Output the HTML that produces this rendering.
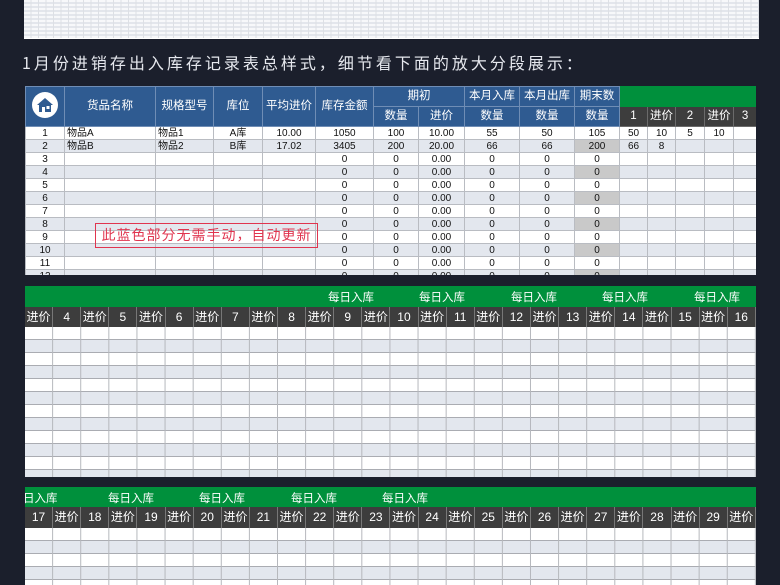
<!DOCTYPE html>
<html><head><meta charset="utf-8"><style>
*{margin:0;padding:0;box-sizing:border-box}
body{width:780px;height:585px;background:#1b1f2c;position:relative;overflow:hidden;font-family:"Liberation Sans","Noto Sans CJK SC",sans-serif}
.thumb{position:absolute;left:24px;top:0;width:735px;height:39px;background-color:#f4f5f8;
background-image:linear-gradient(90deg,transparent calc(100% - 1px),#dde0e5 0),repeating-linear-gradient(180deg,#f7f8fa 0 2px,#e3e6ec 2px 4px);
background-size:7.5px 100%,100% 100%;border-bottom:1px solid #fff}
.title{position:absolute;left:22px;top:50px;color:#e6e8ee;font-size:16px;letter-spacing:3px;white-space:nowrap;font-family:"Noto Sans CJK SC",sans-serif}
.t1{position:absolute;left:25px;top:86px;width:731px;height:189px;overflow:hidden;background:#fff}
table{border-collapse:collapse;table-layout:fixed;font-size:10px}
td{border:1px solid #b9bcc2;height:13px;text-align:center;padding:0;line-height:11px;white-space:nowrap;overflow:hidden;color:#111}
td.l{text-align:left;padding-left:2px}
.h td{background:#2f5b91;color:#fff;font-size:11.5px;border-color:#6f8db5}
tr.a td{background:#fff}
tr.b td{background:#e3e7ee}
tr.b td.g{background:#c9c9c9}
.gr{background:#00903c!important;border-color:#00903c!important}
.dk{background:#3d3d3d!important;color:#fff;font-size:11.5px;border-color:#6a6a6a!important}
.sec{position:absolute;left:25px;width:731px;background:#fff;overflow:hidden}
.gbar{height:21px;background:#00903c;position:relative;color:#fff;font-size:11.5px}
.gbar span{position:absolute;top:3px}
.dbar{display:flex;height:20px;background:#3d3d3d}
.dbar div{flex:1;color:#fff;font-size:12px;text-align:center;line-height:20px;border-right:1px solid #777}
.body{background-image:linear-gradient(90deg,transparent calc(100% - 1px),#b5b7bc 0),repeating-linear-gradient(180deg,#fff 0 12px,#aaacb2 12px 13px,#e3e7ee 13px 25px,#aaacb2 25px 26px);background-size:28.115px 100%,100% 100%}
.red{position:absolute;left:95px;top:223px;width:223px;height:25px;border:1px solid #e0354f;color:#e0354f;font-size:14px;line-height:23px;text-align:center;letter-spacing:1px;font-family:"Noto Sans CJK SC",sans-serif;white-space:nowrap}
</style></head><body>
<div class="thumb"></div>
<div class="title">1月份进销存出入库存记录表总样式，细节看下面的放大分段展示：</div>

<div class="t1"><table style="width:731px">
<colgroup><col style="width:39px"><col style="width:91px"><col style="width:58px"><col style="width:49px"><col style="width:53px"><col style="width:58px"><col style="width:45px"><col style="width:46px"><col style="width:55px"><col style="width:55px"><col style="width:45px"><col style="width:28px"><col style="width:28px"><col style="width:29px"><col style="width:29px"><col style="width:23px"></colgroup>
<tr class="h"><td rowspan="2" style="height:40px"><svg width="28" height="28" viewBox="0 0 28 28"><circle cx="14" cy="14" r="13" fill="#fff"/><path d="M6 14 L14 7 L22 14 L20 14 L20 21 L8 21 L8 14Z" fill="#2f5b91"/><rect x="11" y="16" width="3" height="5" fill="#fff"/><rect x="15.5" y="15" width="3" height="3" fill="#fff"/></svg></td>
<td rowspan="2">货品名称</td><td rowspan="2">规格型号</td><td rowspan="2">库位</td><td rowspan="2">平均进价</td><td rowspan="2">库存金额</td>
<td colspan="2" style="height:20px">期初</td><td>本月入库</td><td>本月出库</td><td>期末数</td><td colspan="5" class="gr"></td></tr>
<tr class="h"><td style="height:20px">数量</td><td>进价</td><td>数量</td><td>数量</td><td>数量</td><td class="dk">1</td><td class="dk">进价</td><td class="dk">2</td><td class="dk">进价</td><td class="dk">3</td></tr>
<tr class="a"><td>1</td><td class="l">物品A</td><td class="l">物品1</td><td>A库</td><td>10.00</td><td>1050</td><td>100</td><td>10.00</td><td>55</td><td>50</td><td>105</td><td>50</td><td>10</td><td>5</td><td>10</td><td></td></tr>
<tr class="b"><td>2</td><td class="l">物品B</td><td class="l">物品2</td><td>B库</td><td>17.02</td><td>3405</td><td>200</td><td>20.00</td><td>66</td><td>66</td><td class="g">200</td><td>66</td><td>8</td><td></td><td></td><td></td></tr>
<tr class="a"><td>3</td><td></td><td></td><td></td><td></td><td>0</td><td>0</td><td>0.00</td><td>0</td><td>0</td><td>0</td><td></td><td></td><td></td><td></td><td></td></tr>
<tr class="b"><td>4</td><td></td><td></td><td></td><td></td><td>0</td><td>0</td><td>0.00</td><td>0</td><td>0</td><td class="g">0</td><td></td><td></td><td></td><td></td><td></td></tr>
<tr class="a"><td>5</td><td></td><td></td><td></td><td></td><td>0</td><td>0</td><td>0.00</td><td>0</td><td>0</td><td>0</td><td></td><td></td><td></td><td></td><td></td></tr>
<tr class="b"><td>6</td><td></td><td></td><td></td><td></td><td>0</td><td>0</td><td>0.00</td><td>0</td><td>0</td><td class="g">0</td><td></td><td></td><td></td><td></td><td></td></tr>
<tr class="a"><td>7</td><td></td><td></td><td></td><td></td><td>0</td><td>0</td><td>0.00</td><td>0</td><td>0</td><td>0</td><td></td><td></td><td></td><td></td><td></td></tr>
<tr class="b"><td>8</td><td></td><td></td><td></td><td></td><td>0</td><td>0</td><td>0.00</td><td>0</td><td>0</td><td class="g">0</td><td></td><td></td><td></td><td></td><td></td></tr>
<tr class="a"><td>9</td><td></td><td></td><td></td><td></td><td>0</td><td>0</td><td>0.00</td><td>0</td><td>0</td><td>0</td><td></td><td></td><td></td><td></td><td></td></tr>
<tr class="b"><td>10</td><td></td><td></td><td></td><td></td><td>0</td><td>0</td><td>0.00</td><td>0</td><td>0</td><td class="g">0</td><td></td><td></td><td></td><td></td><td></td></tr>
<tr class="a"><td>11</td><td></td><td></td><td></td><td></td><td>0</td><td>0</td><td>0.00</td><td>0</td><td>0</td><td>0</td><td></td><td></td><td></td><td></td><td></td></tr>
<tr class="b"><td>12</td><td></td><td></td><td></td><td></td><td>0</td><td>0</td><td>0.00</td><td>0</td><td>0</td><td class="g">0</td><td></td><td></td><td></td><td></td><td></td></tr>
</table></div>
<div class="red">此蓝色部分无需手动，自动更新</div>

<div class="sec" style="top:286px;height:191px">
<div class="gbar"><span style="left:303px">每日入库</span><span style="left:394px">每日入库</span><span style="left:486px">每日入库</span><span style="left:577px">每日入库</span><span style="left:669px">每日入库</span></div>
<div class="dbar"><div>进价</div><div>4</div><div>进价</div><div>5</div><div>进价</div><div>6</div><div>进价</div><div>7</div><div>进价</div><div>8</div><div>进价</div><div>9</div><div>进价</div><div>10</div><div>进价</div><div>11</div><div>进价</div><div>12</div><div>进价</div><div>13</div><div>进价</div><div>14</div><div>进价</div><div>15</div><div>进价</div><div>16</div></div>
<div class="body" style="height:150px"></div>
</div>

<div class="sec" style="top:487px;height:98px">
<div class="gbar" style="height:20px"><span style="left:-2px">日入库</span><span style="left:83px">每日入库</span><span style="left:174px">每日入库</span><span style="left:266px">每日入库</span><span style="left:357px">每日入库</span></div>
<div class="dbar" style="height:21px"><div>17</div><div>进价</div><div>18</div><div>进价</div><div>19</div><div>进价</div><div>20</div><div>进价</div><div>21</div><div>进价</div><div>22</div><div>进价</div><div>23</div><div>进价</div><div>24</div><div>进价</div><div>25</div><div>进价</div><div>26</div><div>进价</div><div>27</div><div>进价</div><div>28</div><div>进价</div><div>29</div><div>进价</div></div>
<div class="body" style="height:60px"></div>
</div>
</body></html>
